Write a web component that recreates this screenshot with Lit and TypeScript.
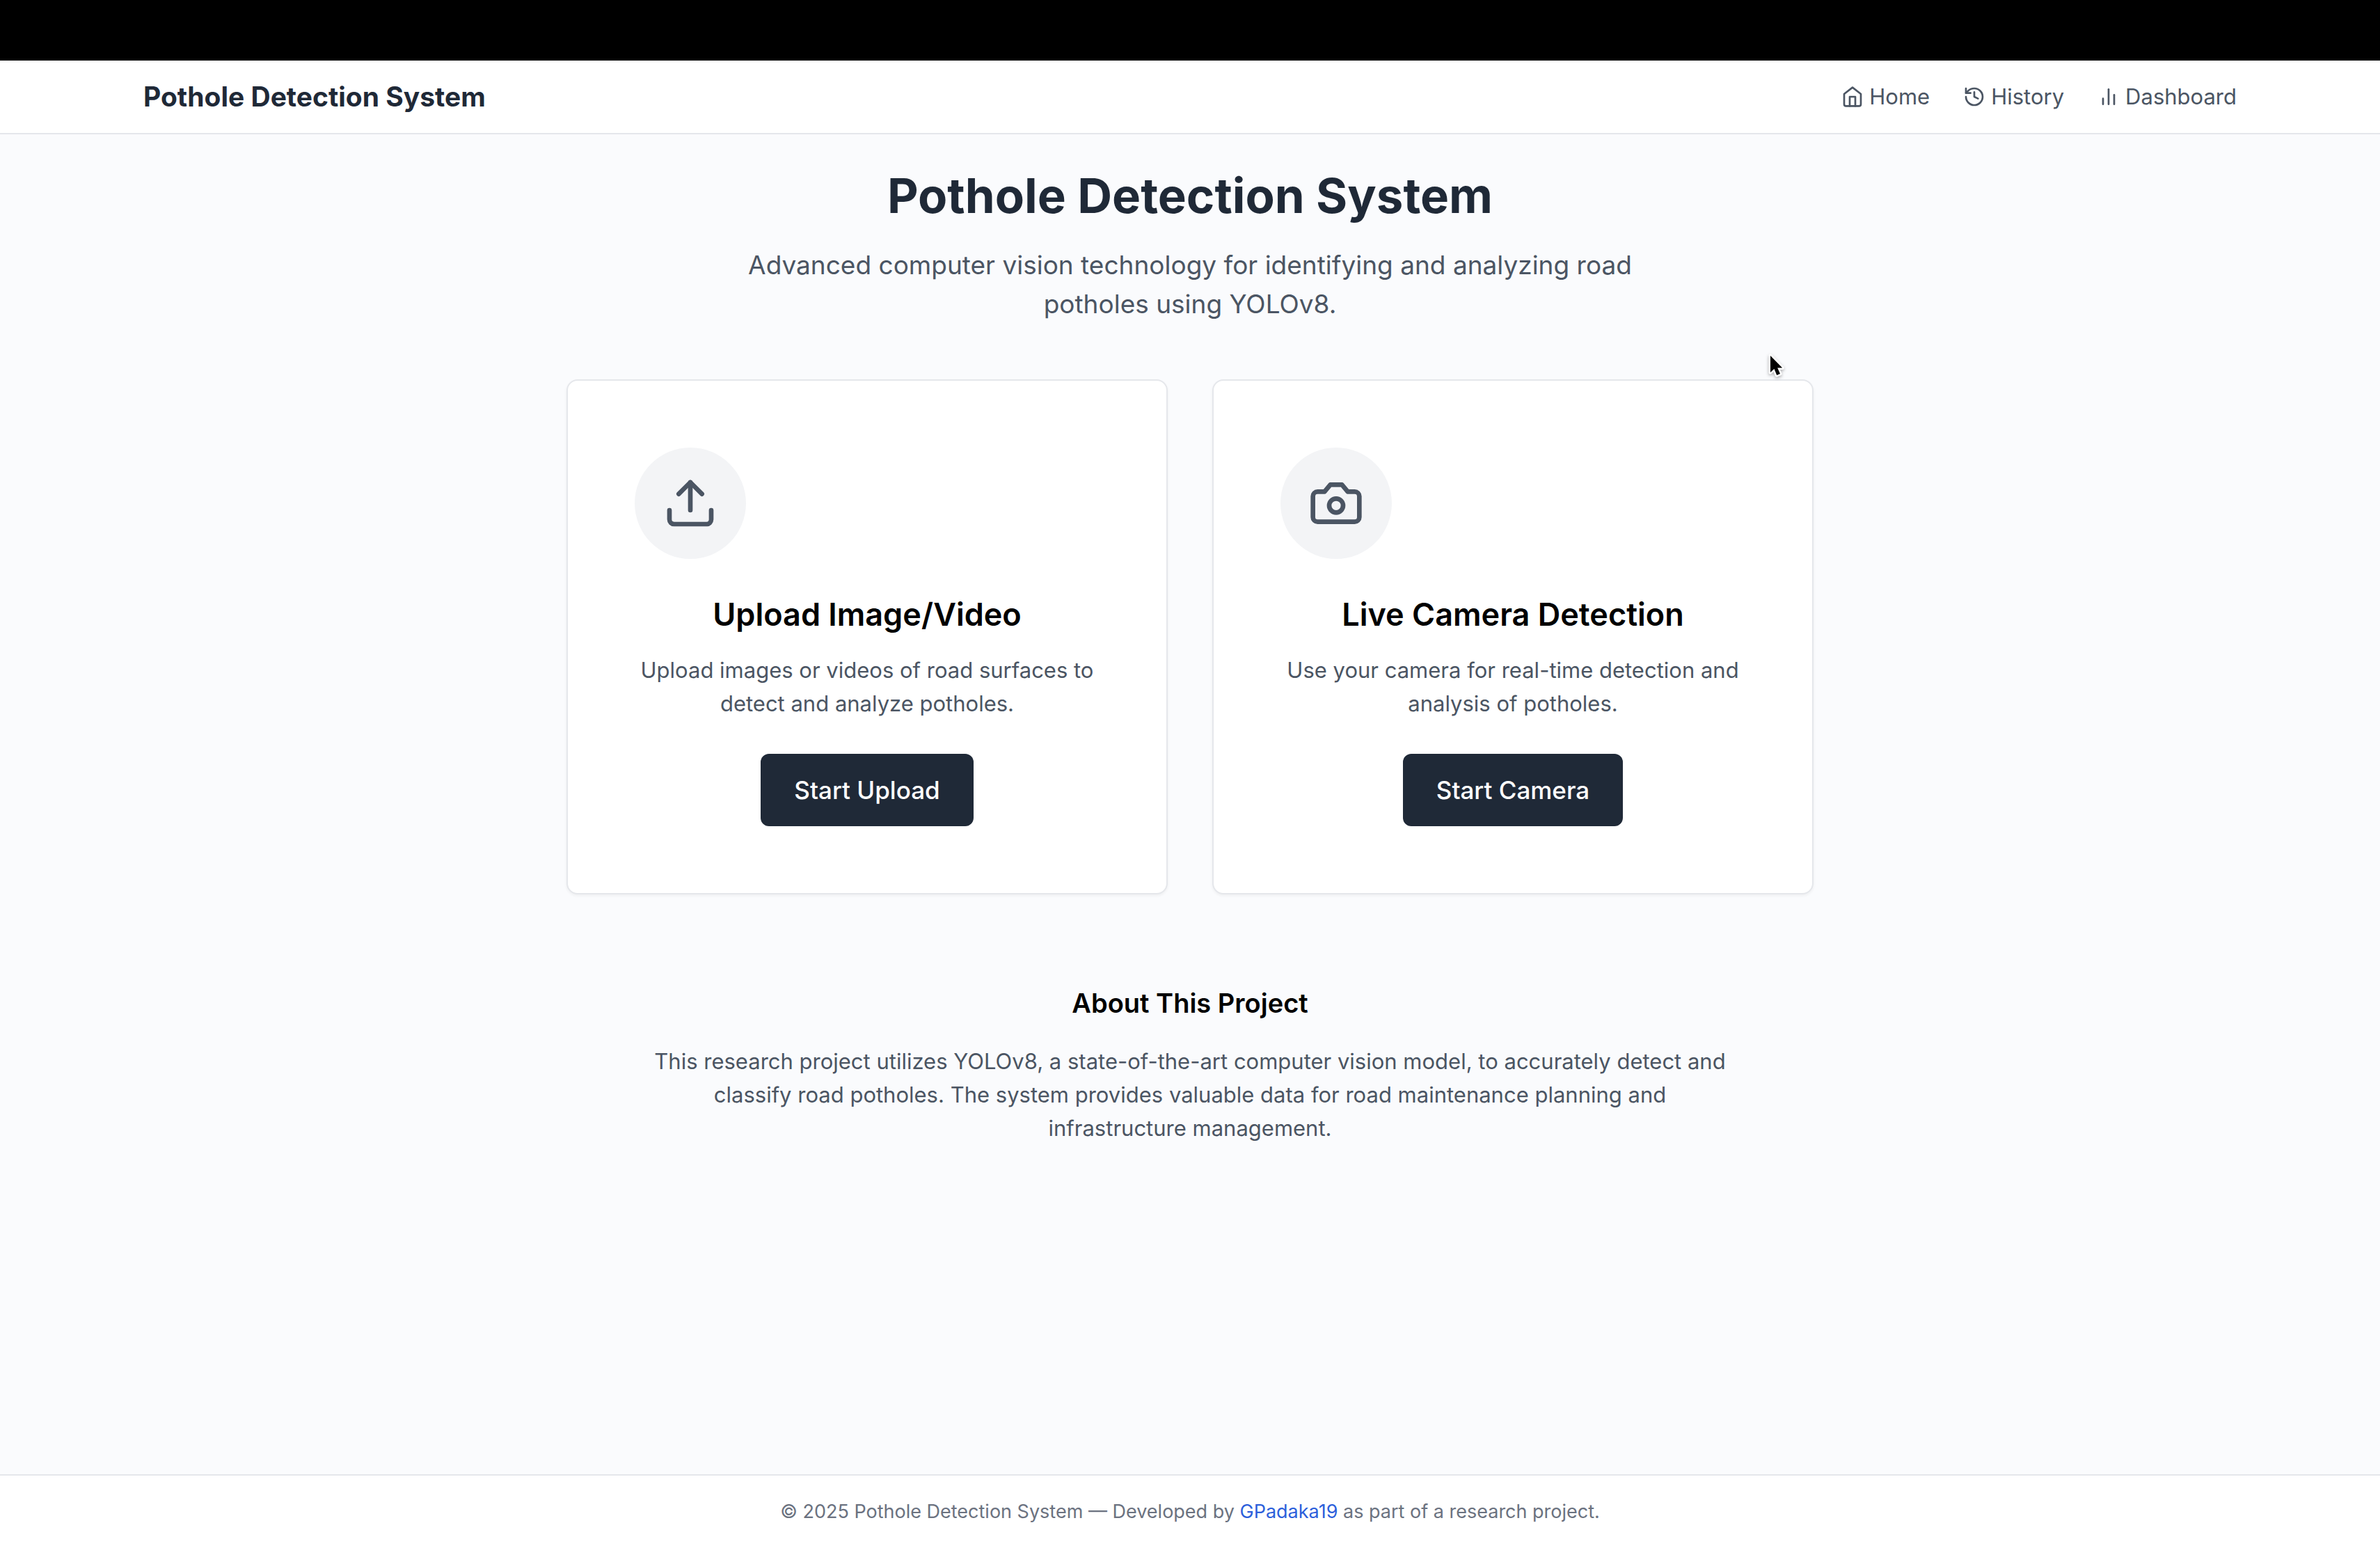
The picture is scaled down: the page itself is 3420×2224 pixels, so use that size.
import { LitElement, html, css, svg, type TemplateResult } from "lit";
import { customElement, property } from "lit/decorators.js";

type IconName = "home" | "history" | "chart" | "upload" | "camera";

const ICONS: Record<IconName, TemplateResult> = {
  home: svg`<path d="m3 9 9-7 9 7v11a2 2 0 0 1-2 2H5a2 2 0 0 1-2-2z" /><path d="M9 22V12h6v10" />`,
  history: svg`<path d="M3 12a9 9 0 1 0 9-9 9.75 9.75 0 0 0-6.74 2.74L3 8" /><path d="M3 3v5h5" /><path d="M12 7v5l4 2" />`,
  chart: svg`<path d="M18 20V10" /><path d="M12 20V4" /><path d="M6 20v-6" />`,
  upload: svg`<path d="M21 15v4a2 2 0 0 1-2 2H5a2 2 0 0 1-2-2v-4" /><path d="m17 8-5-5-5 5" /><path d="M12 3v12" />`,
  camera: svg`<path d="M14.5 4h-5L7 7H4a2 2 0 0 0-2 2v9a2 2 0 0 0 2 2h16a2 2 0 0 0 2-2V9a2 2 0 0 0-2-2h-3l-2.5-3z" /><circle cx="12" cy="13" r="3" />`,
};

@customElement("line-icon")
class LineIcon extends LitElement {
  @property() name: IconName = "home";

  static styles = css`
    :host {
      display: block;
      flex: none;
    }
    .glyph {
      display: block;
      width: 100%;
      height: 100%;
      fill: none;
      stroke: currentColor;
      stroke-width: 2;
      stroke-linecap: round;
      stroke-linejoin: round;
    }
  `;

  render() {
    return html`<svg class="glyph" viewBox="0 0 24 24" aria-hidden="true">${ICONS[this.name]}</svg>`;
  }
}

@customElement("action-card")
class ActionCard extends LitElement {
  @property() icon: IconName = "upload";
  @property() heading = "";
  @property() text = "";
  @property() action = "";

  static styles = css`
    :host {
      display: flex;
      flex-direction: column;
      box-sizing: border-box;
      padding: 96px;
      background: #fff;
      border: 2px solid #e5e7eb;
      border-radius: 16px;
      box-shadow: 0 2px 4px rgba(0, 0, 0, 0.05);
      text-align: center;
    }
    .badge {
      align-self: flex-start;
      padding: 40px;
      margin-bottom: 48px;
      border-radius: 50%;
      background: #f3f4f6;
      color: #4b5563;
    }
    .badge-icon {
      width: 80px;
      height: 80px;
    }
    .heading {
      margin: 0 0 24px;
      font-size: 45px;
      line-height: 64px;
      font-weight: 600;
      color: #000;
    }
    .text {
      margin: 0 0 48px;
      font-size: 31px;
      line-height: 48px;
      color: #4b5563;
    }
    .action {
      align-self: center;
      padding: 24px 48px;
      border: 0;
      border-radius: 12px;
      background: #1f2937;
      color: #fff;
      font-family: inherit;
      font-size: 35px;
      line-height: 56px;
      font-weight: 500;
      cursor: pointer;
    }
  `;

  render() {
    return html`
      <div class="badge"><line-icon class="badge-icon" name=${this.icon}></line-icon></div>
      <h2 class="heading">${this.heading}</h2>
      <p class="text">${this.text}</p>
      <button class="action" type="button">${this.action}</button>
    `;
  }
}

@customElement("app-root")
class AppRoot extends LitElement {
  static styles = css`
    :host {
      display: flex;
      flex-direction: column;
      min-height: 100vh;
      background: #fafbfd;
      font-family: Inter, "Liberation Sans", sans-serif;
      color: #000;
      position: relative;
    }
    .strip {
      height: 87px;
      background: #000;
    }
    .header {
      background: #fff;
      border-bottom: 2px solid #e5e7eb;
    }
    .bar {
      display: flex;
      align-items: center;
      justify-content: space-between;
      box-sizing: border-box;
      max-width: 3072px;
      margin: 0 auto;
      padding: 24px 32px;
    }
    .brand {
      font-size: 39px;
      line-height: 56px;
      font-weight: 700;
      color: #1f2937;
      text-decoration: none;
    }
    .nav {
      display: flex;
      gap: 48px;
    }
    .link {
      display: flex;
      align-items: center;
      gap: 8px;
      font-size: 31px;
      line-height: 48px;
      color: #4b5563;
      text-decoration: none;
    }
    .link-icon {
      width: 32px;
      height: 32px;
    }
    .main {
      flex: 1;
      box-sizing: border-box;
      width: 100%;
      max-width: 1856px;
      margin: 0 auto;
      padding: 48px 32px;
      text-align: center;
    }
    .title {
      margin: 0 0 32px;
      font-size: 69px;
      line-height: 80px;
      font-weight: 700;
      color: #1f2937;
    }
    .lead {
      max-width: 1344px;
      margin: 0 auto 80px;
      font-size: 37px;
      line-height: 56px;
      color: #4b5563;
    }
    .cards {
      display: grid;
      grid-template-columns: repeat(2, minmax(0, 1fr));
      gap: 64px;
      margin-bottom: 128px;
    }
    .about-title {
      margin: 0 0 32px;
      font-size: 38px;
      line-height: 56px;
      font-weight: 600;
    }
    .about-text {
      max-width: 1552px;
      margin: 0 auto;
      font-size: 31px;
      line-height: 48px;
      color: #4b5563;
    }
    .footer {
      padding: 32px;
      border-top: 2px solid #e5e7eb;
      background: #fff;
      font-size: 27px;
      line-height: 40px;
      text-align: center;
      color: #6b7280;
    }
    .author {
      color: #2c5fdb;
      text-decoration: none;
    }
    .pointer {
      position: absolute;
      left: 2536px;
      top: 504px;
      width: 32px;
      height: 40px;
      overflow: visible;
      filter: drop-shadow(0 2px 2px rgba(0, 0, 0, 0.3));
      pointer-events: none;
    }
  `;

  render() {
    return html`
      <div class="strip"></div>
      <header class="header">
        <div class="bar">
          <a class="brand" href="#">Pothole Detection System</a>
          <nav class="nav">
            <a class="link" href="#home"><line-icon class="link-icon" name="home"></line-icon>Home</a>
            <a class="link" href="#history"><line-icon class="link-icon" name="history"></line-icon>History</a>
            <a class="link" href="#dashboard"><line-icon class="link-icon" name="chart"></line-icon>Dashboard</a>
          </nav>
        </div>
      </header>
      <main class="main">
        <h1 class="title">Pothole Detection System</h1>
        <p class="lead">
          Advanced computer vision technology for identifying and analyzing road potholes using YOLOv8.
        </p>
        <section class="cards">
          <action-card
            icon="upload"
            heading="Upload Image/Video"
            text="Upload images or videos of road surfaces to detect and analyze potholes."
            action="Start Upload"
          ></action-card>
          <action-card
            icon="camera"
            heading="Live Camera Detection"
            text="Use your camera for real-time detection and analysis of potholes."
            action="Start Camera"
          ></action-card>
        </section>
        <section>
          <h2 class="about-title">About This Project</h2>
          <p class="about-text">
            This research project utilizes YOLOv8, a state-of-the-art computer vision model, to accurately detect and
            classify road potholes. The system provides valuable data for road maintenance planning and infrastructure
            management.
          </p>
        </section>
      </main>
      <footer class="footer">
        © 2025 Pothole Detection System — Developed by <a class="author" href="#author">GPadaka19</a> as part of a
        research project.
      </footer>
      <svg class="pointer" viewBox="0 0 32 40" aria-hidden="true">
        <path
          d="M8 7v24l5.500-5 3.700 9 4.800-2-3.800-8.500h7z"
          fill="#000"
          stroke="#fff"
          stroke-width="5"
          stroke-linejoin="round"
          paint-order="stroke"
        />
      </svg>
    `;
  }
}
